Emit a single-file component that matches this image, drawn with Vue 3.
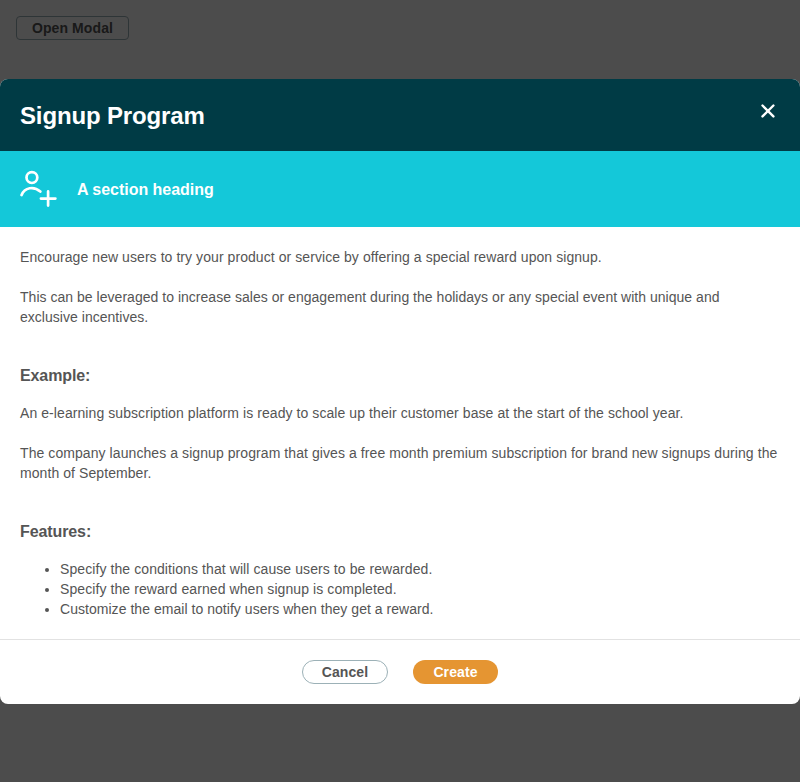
<script setup>
const features = [
  'Specify the conditions that will cause users to be rewarded.',
  'Specify the reward earned when signup is completed.',
  'Customize the email to notify users when they get a reward.',
]
</script>

<template>
  <div class="page">
    <button class="open-btn">Open Modal</button>
    <div class="backdrop">
      <section class="modal" role="dialog">
        <header class="modal-header">
          <h2 class="title">Signup Program</h2>
          <button class="close" aria-label="Close">
            <svg width="16" height="16" viewBox="0 0 16 16" fill="none" stroke="#fff" stroke-width="2.4" stroke-linecap="round">
              <path d="M2.5 2.5 13.4 13.4M13.4 2.5 2.5 13.4" />
            </svg>
          </button>
        </header>
        <div class="banner">
          <svg class="user-icon" width="38" height="38" viewBox="0 0 38 38" fill="none" stroke="#fff" stroke-width="2.7" stroke-linecap="round">
            <circle cx="11.9" cy="7.6" r="5.4" />
            <path d="M1.6 25C4.5 17.3 14 15.8 20.3 21.6" />
            <path d="M28.1 21.4V35.6M20.9 28.6H35.4" />
          </svg>
          <h3 class="banner-title">A section heading</h3>
        </div>
        <div class="body">
          <p class="l1">Encourage new users to try your product or service by offering a special reward upon signup.</p>
          <p class="l2">This can be leveraged to increase sales or engagement during the holidays or any special event with unique and<br />exclusive incentives.</p>
          <h4>Example:</h4>
          <p class="l3">An e-learning subscription platform is ready to scale up their customer base at the start of the school year.</p>
          <p class="l4">The company launches a signup program that gives a free month premium subscription for brand new signups during the<br />month of September.</p>
          <h4>Features:</h4>
          <ul>
            <li v-for="f in features" :key="f">{{ f }}</li>
          </ul>
        </div>
        <footer class="modal-footer">
          <button class="btn cancel">Cancel</button>
          <button class="btn create">Create</button>
        </footer>
      </section>
    </div>
  </div>
</template>

<style>
body {
  margin: 0;
  background: #fff;
}
</style>

<style scoped>
.page {
  position: relative;
  box-sizing: border-box;
  height: 782px;
  padding: 16px;
  overflow: hidden;
  background: #fff;
  color: #555;
  font: 14px/20px "Liberation Sans", Arial, sans-serif;
}
button {
  box-sizing: border-box;
  margin: 0;
  padding: 0;
  font: bold 14px/20px "Liberation Sans", Arial, sans-serif;
  letter-spacing: 0.1px;
}
.open-btn {
  display: block;
  width: 113px;
  height: 24px;
  border: 1px solid #9cb1b7;
  border-radius: 4px;
  background: transparent;
  color: #555;
}
.backdrop {
  position: absolute;
  inset: 0;
  display: flex;
  flex-direction: column;
  padding-top: 79px;
  background: rgba(0, 0, 0, 0.7);
}
.modal {
  display: flex;
  flex-direction: column;
  height: 625px;
  overflow: hidden;
  border-radius: 8px;
  background: #fff;
}
.modal-header {
  box-sizing: border-box;
  display: flex;
  align-items: center;
  justify-content: space-between;
  height: 72px;
  padding: 0 24px 0 20px;
  background: #003b45;
  color: #fff;
}
h2,
h3,
h4,
p,
ul {
  margin: 0;
}
.title {
  padding-top: 2px;
  font-size: 24px;
  line-height: 30px;
  letter-spacing: -0.14px;
}
.close {
  display: flex;
  margin-bottom: 8px;
  border: 0;
  background: none;
}
.banner {
  display: flex;
  align-items: center;
  gap: 19px;
  height: 76px;
  padding-left: 20px;
  background: #14c8d9;
  color: #fff;
}
.banner-title {
  padding-top: 2px;
  font-size: 16px;
  line-height: 20px;
  letter-spacing: -0.03px;
}
.body {
  flex: 1;
  padding: 20px 20px 0;
}
.body p {
  margin-bottom: 20px;
  white-space: nowrap;
}
.l1 {
  letter-spacing: 0.067px;
}
.l2 {
  letter-spacing: 0.027px;
}
.l3,
.l4 {
  letter-spacing: 0.076px;
}
.body h4 {
  margin: 39px 0 17px;
  font-size: 16px;
  line-height: 20px;
  letter-spacing: -0.1px;
}
.body ul {
  padding-left: 40px;
  white-space: nowrap;
  letter-spacing: 0.085px;
}
.body li:nth-child(3) {
  letter-spacing: 0.04px;
}
.modal-footer {
  box-sizing: border-box;
  display: flex;
  justify-content: center;
  gap: 25px;
  height: 65px;
  padding-top: 20px;
  border-top: 1px solid #e2e2e2;
}
.btn {
  height: 24px;
  border-radius: 12px;
}
.cancel {
  width: 86px;
  border: 1px solid #9cb1b7;
  background: #fff;
  color: #555;
}
.create {
  width: 85px;
  border: 0;
  background: #e59532;
  color: #fff;
}
</style>
